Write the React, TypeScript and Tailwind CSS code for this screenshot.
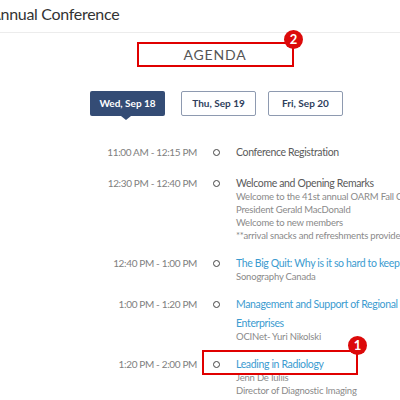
import React from 'react';

type Session = {
  time: string;
  title: string[];
  link?: boolean;
  lines?: string[];
};

const sessions: Session[] = [
  { time: '11:00 AM - 12:15 PM', title: ['Conference Registration'] },
  {
    time: '12:30 PM - 12:40 PM',
    title: ['Welcome and Opening Remarks'],
    lines: [
      'Welcome to the 41st annual OARM Fall Conference',
      'President Gerald MacDonald',
      'Welcome to new members',
      '**arrival snacks and refreshments provided',
    ],
  },
  {
    time: '12:40 PM - 1:00 PM',
    title: ['The Big Quit: Why is it so hard to keep staff?'],
    link: true,
    lines: ['Sonography Canada'],
  },
  {
    time: '1:00 PM - 1:20 PM',
    title: ['Management and Support of Regional', 'Enterprises'],
    link: true,
    lines: ['OCINet- Yuri Nikolski'],
  },
  {
    time: '1:20 PM - 2:00 PM',
    title: ['Leading in Radiology'],
    link: true,
    lines: ['Jenn De Iuliis', 'Director of Diagnostic Imaging'],
  },
];

function Badge({ n }: { n: number }) {
  return (
    <div className="absolute w-[19px] h-[19px] rounded-full bg-[#dc0a0a] text-white text-[13px] font-bold leading-[19px] text-center">
      {n}
    </div>
  );
}

export default function App() {
  return (
    <div
      className="relative w-[400px] h-[400px] overflow-hidden bg-white whitespace-nowrap"
      style={{ fontFamily: 'Lato, "Open Sans", sans-serif' }}
    >
      {/* header, scrolled slightly so the title is clipped on the left */}
      <div className="h-[33px] pb-[5px] border-b border-[#ececec] flex items-center">
        <div className="-ml-[10px] text-[16px] text-[#333] tracking-[-0.3px]">Annual Conference</div>
      </div>

      {/* agenda heading */}
      <div className="relative mt-[9px] h-[25px] flex justify-center pl-[30px]">
        <div className="text-[14px] tracking-[0.8px] text-[#555] leading-[25px]">AGENDA</div>
      </div>

      {/* day tabs */}
      <div className="mt-[24px] flex pl-[90px]">
        <div className="relative w-[75px] h-[25px] bg-[#344c75] rounded-[2px] text-white text-[10px] font-bold flex items-center justify-center">
          Wed, Sep 18
          <div className="absolute left-[31px] -bottom-[4px] w-0 h-0 border-l-[5px] border-r-[5px] border-t-[4px] border-l-transparent border-r-transparent border-t-[#344c75]" />
        </div>
        <div className="ml-[16px] w-[75px] h-[25px] border-[1.5px] border-[#8e9ab0] rounded-[2px] text-[#2e3e5c] text-[10px] font-bold flex items-center justify-center">
          Thu, Sep 19
        </div>
        <div className="ml-[12px] w-[75px] h-[25px] border-[1.5px] border-[#8e9ab0] rounded-[2px] text-[#2e3e5c] text-[10px] font-bold flex items-center justify-center">
          Fri, Sep 20
        </div>
      </div>

      {/* timeline */}
      <div className="mt-[27px] flex flex-col gap-[12px]">
        {sessions.map((s) => (
          <div key={s.time} className="flex">
            <div className="w-[197px] shrink-0 text-right text-[10px] tracking-[-0.35px] text-[#808080] leading-[19px]">
              {s.time}
            </div>
            <div className="w-[39px] shrink-0 h-[19px] flex items-center justify-center">
              <div className="w-[7px] h-[7px] rounded-full border-[1.5px] border-[#444]" />
            </div>
            <div className="shrink-0">
              {s.title.map((t) => (
                <div
                  key={t}
                  className={`text-[10.5px] tracking-[-0.35px] leading-[19px] ${s.link ? 'text-[#3b9bd0]' : 'text-[#5a5a5a]'}`}
                >
                  {t}
                </div>
              ))}
              {s.lines && (
                <div className="-mt-[3px]">
                  {s.lines.map((l) => (
                    <div key={l} className="text-[9.5px] tracking-[-0.2px] leading-[13px] text-[#8a8a8a]">
                      {l}
                    </div>
                  ))}
                </div>
              )}
            </div>
          </div>
        ))}
      </div>

      {/* annotation overlays */}
      <div className="absolute left-[137px] top-[42px] w-[157px] h-[25px] border-2 border-[#e00000]" />
      <div className="absolute left-[284px] top-[30px]">
        <div className="relative">
          <Badge n={2} />
        </div>
      </div>
      <div className="absolute left-[202px] top-[350px] w-[156px] h-[25px] border-2 border-[#e00000]" />
      <div className="absolute left-[348px] top-[336px]">
        <div className="relative">
          <Badge n={1} />
        </div>
      </div>
    </div>
  );
}
